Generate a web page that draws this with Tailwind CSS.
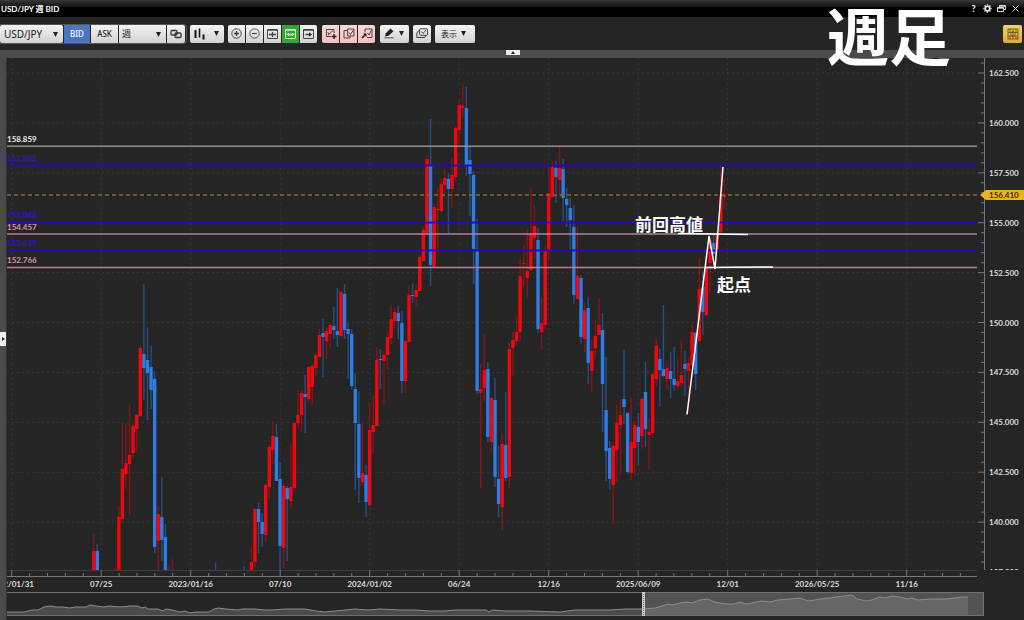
<!DOCTYPE html>
<html lang="ja">
<head>
    <meta charset="UTF-8">
    <meta name="viewport" content="width=device-width, initial-scale=1.0">
    <title>USD/JPY 週 BID</title>
    <script src="https://cdn.jsdelivr.net/npm/@tailwindcss/browser@4"></script>
</head>
<body class="h-screen flex flex-col overflow-hidden bg-[#252525] text-white font-[family-name:'Noto_Sans','Noto_Sans_CJK_JP',sans-serif]">
    <!-- Title bar -->
    <header class="h-[17px] shrink-0 flex items-center justify-between pl-px pr-1 bg-linear-to-b from-[#383838] via-[#151515] via-40% to-black to-50% font-[family-name:'Lato','Noto_Sans_CJK_JP',sans-serif]">
        <h1 class="text-[8px] leading-3 font-bold">USD/JPY 週 BID</h1>
        <div class="flex items-center gap-[5px]">
            <button aria-label="Help" class="w-[9px] text-[9px] leading-3 font-bold">?</button>
            <button aria-label="Settings">
                <svg class="size-[9px]" viewBox="0 0 9 9" fill="none" stroke="#eee">
                    <circle cx="4.5" cy="4.5" r="2.3" stroke-width="1.6"/>
                    <path d="M4.5 0.3v1.4M4.5 7.3v1.4M0.3 4.5h1.4M7.3 4.5h1.4M1.5 1.5l1 1M6.5 6.5l1 1M7.5 1.5l-1 1M2.5 6.5l-1 1" stroke-width="1.3"/>
                </svg>
            </button>
            <button aria-label="Restore">
                <svg class="size-[9px]" viewBox="0 0 9 9" fill="none" stroke="#ddd" stroke-width="1">
                    <path d="M2.5 3V1.500h6v4H7"/>
                    <path d="M2.500 2h6" stroke-width="1.500"/>
                    <path d="M0.500 3.500h6v4h-6zM0.500 4.200h6"/>
                </svg>
            </button>
            <button aria-label="Close">
                <svg class="size-[9px]" viewBox="0 0 9 9" fill="none" stroke="#ddd" stroke-width="1"><path d="M1.500 1.500l6 6M7.500 1.500l-6 6"/></svg>
            </button>
        </div>
    </header>

    <!-- Toolbar -->
    <div class="h-[33px] shrink-0 flex items-center text-[#222] pr-[2px]">
        <div class="flex gap-px h-5 items-center border border-l-0 border-[#555] rounded-r-sm pr-px">
            <div class="relative">
                <select aria-label="Pair" class="appearance-none block w-[63px] h-[18px] pl-1 rounded-xs text-[10px] leading-[18px] bg-linear-to-b from-[#f4f4f4] to-[#d2d2d2]"><option>USD/JPY</option></select>
                <svg class="absolute right-[5px] top-[7px] w-[5px] h-[5px] pointer-events-none" viewBox="0 0 5 5"><path d="M0 0h5L2.500 5z" fill="#222"/></svg>
            </div>
            <button class="w-[26px] h-[18px] text-[8px] font-medium bg-[#4a75c4] text-white">BID</button>
            <button class="w-[27px] h-[18px] text-[8px] font-medium bg-linear-to-b from-[#f4f4f4] to-[#d2d2d2]">ASK</button>
            <div class="relative">
                <select aria-label="Period" class="appearance-none block w-[47px] h-[18px] pl-[3px] text-[9px] leading-[18px] bg-linear-to-b from-[#f4f4f4] to-[#d2d2d2]"><option>週</option></select>
                <svg class="absolute right-[5px] top-[7px] w-[5px] h-[5px] pointer-events-none" viewBox="0 0 5 5"><path d="M0 0h5L2.500 5z" fill="#222"/></svg>
            </div>
            <button aria-label="Link" class="w-[18px] h-[18px] rounded-r-xs flex items-center justify-center bg-linear-to-b from-[#f4f4f4] to-[#d2d2d2]">
                <svg class="w-3 h-[10px]" viewBox="0 0 12 10" fill="none" stroke="#333" stroke-width="1.300"><rect x="1" y="1.500" width="6" height="4.500" rx="1"/><rect x="5" y="4" width="6" height="4.500" rx="1"/></svg>
            </button>
        </div>
        <button aria-label="Chart type" class="ml-[3px] w-[34px] h-[18px] rounded-xs flex items-center justify-between pl-1 pr-[5px] bg-linear-to-b from-[#f4f4f4] to-[#d2d2d2]">
            <svg class="w-[11px] h-3" viewBox="0 0 11 12" stroke="#111"><path d="M1.500 2v8M9.500 6.500v5" stroke-width="2"/><path d="M5.500 0.500v9" stroke-width="1.600"/></svg>
            <svg class="w-[5px] h-[5px]" viewBox="0 0 5 5"><path d="M0 0h5L2.500 5z" fill="#222"/></svg>
        </button>
        <div class="ml-1 flex gap-px">
            <button aria-label="Zoom in" class="w-[17px] h-[18px] rounded-l-xs flex items-center justify-center bg-linear-to-b from-[#f4f4f4] to-[#d2d2d2]">
                <svg class="size-[11px]" viewBox="0 0 11 11" fill="none" stroke="#333"><circle cx="5.500" cy="5.500" r="4.700" stroke-width="0.900"/><path d="M3 5.500h5M5.500 3v5" stroke-width="1.300"/></svg>
            </button>
            <button aria-label="Zoom out" class="w-[17px] h-[18px] flex items-center justify-center bg-linear-to-b from-[#f4f4f4] to-[#d2d2d2]">
                <svg class="size-[11px]" viewBox="0 0 11 11" fill="none" stroke="#444"><circle cx="5.500" cy="5.500" r="4.700" stroke-width="0.900"/><path d="M3 5.500h5" stroke-width="1.100"/></svg>
            </button>
            <button aria-label="Fit all" class="w-[17px] h-[18px] flex items-center justify-center bg-linear-to-b from-[#f4f4f4] to-[#d2d2d2]">
                <svg class="w-[11px] h-[10px]" viewBox="0 0 11 10" fill="none" stroke="#444"><rect x="0.500" y="0.500" width="10" height="9" rx="0.500"/><path d="M0.500 1h10M2 5.500h7M5.500 3v5" stroke-width="1.300"/></svg>
            </button>
            <button aria-label="Fit width" class="w-[17px] h-[18px] flex items-center justify-center bg-[#35a535]">
                <svg class="w-[11px] h-[10px]" viewBox="0 0 11 10" fill="none" stroke="#cdebc9"><rect x="0.500" y="0.500" width="10" height="9" rx="0.500"/><path d="M0.500 1h10M1.500 5.500h8" stroke-width="1.300"/><path d="M3.500 4v3M7.500 4v3"/></svg>
            </button>
            <button aria-label="Go to latest" class="w-[17px] h-[18px] rounded-r-xs flex items-center justify-center bg-linear-to-b from-[#f4f4f4] to-[#d2d2d2]">
                <svg class="w-[11px] h-[10px]" viewBox="0 0 11 10" fill="none" stroke="#444"><rect x="0.500" y="0.500" width="10" height="9" rx="0.500"/><path d="M0.500 1h10M2.500 5.500h4" stroke-width="1.500"/><path d="M6 3.200l3 2.300-3 2.300z" fill="#222" stroke="none"/></svg>
            </button>
        </div>
        <div class="ml-[5px] flex gap-px">
            <button aria-label="Add drawing" class="w-[17px] h-[18px] rounded-l-xs flex items-center justify-center bg-linear-to-b from-[#f8dada] to-[#f3c0c0]">
                <svg class="w-3 h-[11px]" viewBox="0 0 12 11" fill="none" stroke="#5a4040"><path d="M9 5V1.500H1.500V8.500H6M3 7L8 2.500M3 4.500l1 2"/><path d="M9 6v5M6.500 8.500h5" stroke="#222" stroke-width="1.400"/></svg>
            </button>
            <button aria-label="Copy drawing" class="w-[17px] h-[18px] flex items-center justify-center bg-linear-to-b from-[#f8dada] to-[#f3c0c0]">
                <svg class="w-3 h-[11px]" viewBox="0 0 12 11" fill="none" stroke="#5a4040"><path d="M4.500 1H11v7H4.500z"/><path d="M4.500 2.500H1v7.500h6V8M6 4.500l1.500 2L10.500 2"/></svg>
            </button>
            <button aria-label="Edit drawing" class="w-[17px] h-[18px] rounded-r-xs flex items-center justify-center bg-linear-to-b from-[#f8dada] to-[#f3c0c0]">
                <svg class="w-3 h-[11px]" viewBox="0 0 12 11" fill="none" stroke="#5a4040"><path d="M4 4.500V1H11v8.500H6M6.500 5l1.500 2L10.500 2"/><path d="M1 10l3-3" stroke="#222" stroke-width="1.600"/><path d="M2 5.500h3.500v3.500z" fill="#222" stroke="none"/></svg>
            </button>
        </div>
        <button aria-label="Pen" class="ml-[5px] w-[29px] h-[18px] rounded-xs flex items-center justify-between pl-1 pr-[5px] bg-linear-to-b from-[#f4f4f4] to-[#d2d2d2]">
            <svg class="w-[11px] h-[11px]" viewBox="0 0 11 11"><path d="M1 8.500L1.800 5.300 6.500 0.500l3 2.800L4.500 7.800z" fill="#222"/><path d="M0.500 9.800h9" stroke="#555"/></svg>
            <svg class="w-[5px] h-[5px]" viewBox="0 0 5 5"><path d="M0 0h5L2.500 5z" fill="#222"/></svg>
        </button>
        <button aria-label="Windows" class="ml-1 w-[18px] h-[18px] rounded-xs flex items-center justify-center bg-linear-to-b from-[#f4f4f4] to-[#d2d2d2]">
            <svg class="w-3 h-[11px]" viewBox="0 0 12 11" fill="none" stroke="#444"><rect x="3.500" y="0.800" width="8" height="6.500" rx="1"/><path d="M3.500 3H2.300l-1.500 2v4.500h8l1-2M5.500 3.500l1.500 2 3-3.500"/></svg>
        </button>
        <button class="ml-1 w-10 h-[18px] rounded-xs flex items-center justify-between pl-[6px] pr-[9px] text-[8px] bg-linear-to-b from-[#f4f4f4] to-[#d2d2d2]">
            <span class="whitespace-nowrap">表示</span>
            <svg class="w-[5px] h-[5px]" viewBox="0 0 5 5"><path d="M0 0h5L2.500 5z" fill="#222"/></svg>
        </button>
        <button aria-label="Layout" class="ml-auto w-[19px] h-[18px] rounded-xs flex items-center justify-center bg-linear-to-b from-[#f2d668] to-[#dda83c]">
            <svg class="size-3" viewBox="0 0 12 12" fill="none" stroke="#6b571c" stroke-width="0.900"><rect x="1" y="1" width="10" height="10"/><path d="M1 4.500h10M1 8h10M6 1v10M3 1v3.500M9 1v3.500M3 8v3M9 8v3"/><circle cx="6" cy="6" r="2.300"/></svg>
        </button>
    </div>

    <div class="h-2 shrink-0 bg-[#4b4b4b] flex justify-center">
        <button aria-label="Collapse toolbar" class="ml-[2px] w-[14px] h-[5px] bg-[#eee] flex items-center justify-center">
            <svg class="w-1 h-[3px]" viewBox="0 0 4 3"><path d="M0 3h4L2 0z" fill="#222"/></svg>
        </button>
    </div>

    <div class="flex-1 min-h-0 flex">
        <div class="w-[7px] shrink-0 bg-[#4b4b4b] flex items-center border-r border-[#333]">
            <button aria-label="Open panel" class="w-[6px] h-[14px] bg-[#eee] flex items-center justify-center">
                <svg class="w-[3px] h-1" viewBox="0 0 3 4"><path d="M0 0v4L3 2z" fill="#222"/></svg>
            </button>
        </div>

        <main class="flex-1 min-w-0 flex flex-col pb-1 font-[family-name:'Lato','Noto_Sans_CJK_JP',sans-serif]">
            <div class="flex-1 min-h-0 flex">
                <!-- Plot -->
                <div id="plot" class="relative flex-1 min-w-0">
                    <svg class="absolute inset-0 size-full" viewBox="7 58 970 512" preserveAspectRatio="none">
                        <g id="grid" stroke="#363636" stroke-dasharray="2 3"></g>
                        <g id="candles"></g>
                        <path d="M7 195H977" stroke="#8a6c1c" stroke-width="1.300" stroke-dasharray="4 3"/>
                        <path d="M7 146.300H977" stroke="#918d8d" stroke-width="1.600"/>
                        <path d="M7 165.500H977M7 222.500H977M7 250.500H977" stroke="#2a08b8" stroke-width="1.800"/>
                        <path d="M7 234H977M7 267.500H977" stroke="#b77f93" stroke-width="1.600"/>
                        <g fill="none" stroke="#fff" stroke-width="1.500">
                            <path d="M687 414.500L709 236L715 269L723 167"/>
                            <path d="M678 233.500L748 234.500M705 267.500L773 267"/>
                        </g>
                    </svg>
                    <div id="lineLabels"></div>
                </div>
                <!-- Price axis -->
                <div id="priceAxis" class="relative w-[47px] shrink-0 overflow-hidden">
                    <svg class="absolute left-0 top-0 w-[8px] h-full" viewBox="0 58 8 512" preserveAspectRatio="none">
                        <path id="priceTicks" fill="none" stroke="#777"/>
                    </svg>
                </div>
            </div>

            <!-- Date axis -->
            <div id="dateAxis" class="relative h-[22px] shrink-0 mr-[47px] overflow-hidden">
                <svg class="absolute left-0 top-0 w-full h-[7px]" viewBox="7 570 970 7" preserveAspectRatio="none">
                    <path d="M7 570.500H977" stroke="#3c3c3c"/>
                    <path id="dateTicks" fill="none" stroke="#777"/>
                </svg>
            </div>

            <!-- Range navigator -->
            <div class="h-6 shrink-0 mr-10">
                <svg class="size-full" viewBox="7 592 977 24" preserveAspectRatio="none">
                    <rect x="644" y="592" width="340" height="24" fill="#535353"/>
                    <path id="navLeft" fill="#4b4b4b"/>
                    <path id="navRight" fill="#666"/>
                    <path id="navLine" fill="none" stroke="#8d8d8d"/>
                    <path d="M7 592.500H984M7 615.500H984M983.500 592V616" stroke="#707070"/>
                    <path d="M643.500 592V616" stroke="#c9c9c9" stroke-width="3"/>
                    <path d="M643.500 594V615" stroke="#777" stroke-dasharray="1 1"/>
                </svg>
            </div>
        </main>
    </div>

    <p class="absolute right-[73px] -top-2 text-[62px] leading-[84px] font-bold font-[family-name:'Noto_Sans_CJK_JP',sans-serif] pointer-events-none">週足</p>

    <script>
        const TOP = 58, LEFT = 7, W = 970, H = 512;
        const STEP = 3.583, X0 = 100.9;

        // bar number, direction (r = up, b = down), high, body top, body bottom, low
        const bars = `
-2 r 534 551 570 570|-1 b 544 551 570 570|4 r 568 570 570 570|5 r 506 517 570 570|6 r 423 469 519 520
7 r 423 463 474 489|8 r 404 455 464 515|9 r 424 426 453 458|10 r 414 415 429 452|11 r 345 348 416 417
12 b 284 354 368 400|13 b 328 360 373 420|14 b 346 367 390 409|15 b 371 379 547 553|16 r 506 514 541 569
17 b 477 517 540 561|18 b 524 537 570 570|19 r 565 570 570 570|20 r 559 570 570 570|32 b 563 570 570 570
40 b 566 570 570 570|42 r 547 562 570 570|43 r 508 509 562 568|44 b 503 509 522 553|45 b 513 522 534 547
46 r 484 485 535 542|47 r 445 447 487 498|48 r 421 436 450 464|49 b 424 437 481 481|50 b 462 479 546 570
51 r 483 486 548 568|52 b 486 488 499 561|53 r 445 487 501 508|54 r 423 423 488 492|55 r 391 415 423 429
56 r 390 393 415 432|57 b 375 394 397 433|58 r 366 367 399 402|59 r 364 366 387 405|60 r 354 355 368 376
61 r 329 335 357 357|62 b 319 333 337 377|63 r 327 331 341 359|64 r 323 325 334 347|65 b 307 326 330 339
66 b 288 331 335 347|67 r 291 292 336 337|68 b 284 294 330 339|69 b 323 329 334 379|70 b 329 334 386 389
71 b 373 389 423 490|72 b 391 424 478 503|73 r 423 473 482 485|74 b 465 475 502 517|75 r 403 430 505 506
76 r 395 425 432 454|77 r 347 360 426 426|78 b 349 359 360 389|79 r 351 355 361 405|80 r 331 337 355 370
81 r 305 319 338 344|82 r 308 312 321 329|83 b 306 313 321 339|84 b 311 323 381 393|85 r 340 341 381 393
86 r 285 295 342 342|87 b 283 295 296 303|88 r 284 290 297 306|89 r 255 257 291 291|90 r 227 230 261 261
91 r 155 159 233 234|92 b 119 166 265 286|93 r 204 207 267 267|94 r 188 209 210 252|95 r 179 184 211 213
96 r 169 178 185 194|97 b 174 179 189 233|98 r 158 175 189 208|99 r 127 128 177 180|100 r 98 105 130 148
101 r 84 106 108 117|102 b 87 108 165 176|103 b 147 160 174 216|104 b 171 175 249 284|105 b 219 250 391 394
106 r 364 389 393 488|107 r 334 370 388 401|108 b 362 369 437 442|109 r 397 398 442 453|110 b 378 400 477 487
111 b 446 479 504 517|112 r 433 444 507 530|113 b 392 445 478 481|114 r 342 349 477 489|115 r 332 340 348 376
116 r 316 332 341 346|117 r 259 276 332 341|118 r 245 263 264 287|119 r 229 271 278 297|120 r 188 234 270 271
121 r 205 226 238 258|122 b 228 240 329 333|123 r 298 323 332 350|124 r 247 251 325 329|125 r 166 193 250 259
126 r 161 167 197 198|127 b 161 168 177 203|128 r 146 168 180 198|129 b 159 169 198 223|130 b 188 199 205 227
131 b 198 208 220 249|132 b 205 227 295 304|133 r 227 276 299 299|134 b 275 278 337 344|135 r 303 310 339 352
136 b 297 308 363 384|137 r 339 351 371 392|138 r 320 336 348 359|139 r 298 325 335 335|140 b 313 330 384 432
141 b 357 410 451 481|142 b 441 448 479 490|143 r 442 446 485 524|144 r 404 423 450 482|145 r 399 415 425 475
146 b 350 399 407 424|147 b 412 413 472 474|148 r 397 442 473 480|149 r 421 425 448 475|150 b 413 427 442 466
151 r 398 399 436 449|152 b 362 392 429 447|153 r 418 432 435 469|154 r 373 374 433 438|155 r 339 346 379 386
156 b 349 359 370 406|157 b 305 369 376 377|158 r 361 368 379 390|159 b 352 371 379 398|160 b 347 379 385 391
161 r 359 381 386 389|162 r 340 375 383 387|163 b 351 364 369 396|164 r 357 363 371 412|165 r 324 332 365 365
166 b 332 333 374 390|167 r 258 289 341 342|168 b 273 287 312 335|169 r 263 267 315 316|170 r 237 240 263 292
171 b 235 243 254 254|172 r 230 235 250 250|173 r 166 195 232 233|174 r 179 195 197 210`.trim().split(/[|\n]/);

        document.getElementById('candles').innerHTML = bars.map(bar => {
            const [n, dir, high, top, bottom, low] = bar.split(' ');
            const x = X0 + STEP * n;
            const up = dir === 'r';
            return `<path d="M${x} ${high}V${low}" stroke="${up ? '#861519' : '#245083'}" stroke-width="1.4"/>` +
                `<path d="M${x} ${top}V${bottom}" stroke="${up ? '#f3070e' : '#2f7ce4'}" stroke-width="3.4"/>`;
        }).join('');

        // Grid and axes
        const dates = ['2022/01/31', '07/25', '2023/01/16', '07/10', '2024/01/02', '06/24', '12/16', '2025/06/09', '12/01', '2026/05/25', '11/16'];
        const dateAxis = document.getElementById('dateAxis');
        let grid = '';
        let dateTicks = 'M7 576.5H977';
        dates.forEach((date, i) => {
            const x = 11.7 + 89.5 * i;
            grid += `<path d="M${x} 58V570"/>`;
            for (let j = 0; j < 5; j++) {
                const tx = x + 17.9 * j;
                if (tx < 977) dateTicks += `M${tx} ${j ? 573 : 570}V577`;
            }
            dateAxis.insertAdjacentHTML('beforeend',
                `<span class="absolute top-2 -translate-x-1/2 whitespace-nowrap text-[8px] leading-3 font-bold text-[#ddd]" style="left:${(x - LEFT) / W * 100}%">${date}</span>`);
        });

        const priceAxis = document.getElementById('priceAxis');
        let priceTicks = 'M7.5 58V570';
        for (let i = 0; i <= 10; i++) {
            const y = 73 + 49.9 * i;
            grid += `<path d="M7 ${y}H977"/>`;
            for (let j = -1; j < 4; j++) {
                priceTicks += `M${j ? 4 : 1} ${y + j * 9.98}H8`;
            }
            priceAxis.insertAdjacentHTML('beforeend',
                `<span class="absolute left-3 -translate-y-1/2 text-[8px] leading-3 font-bold text-[#ddd]" style="top:${(y - TOP) / H * 100}%">${(162.5 - 2.5 * i).toFixed(3)}</span>`);
        }
        priceAxis.insertAdjacentHTML('beforeend',
            `<div class="absolute left-[3px] right-0 h-[10px] -translate-y-1/2 flex items-center" style="top:${(195 - TOP) / H * 100}%">
                <svg class="w-[6px] h-full" viewBox="0 0 6 10"><path d="M0 5L6 0V10z" fill="#eab41c"/></svg>
                <span class="flex-1 h-full pl-[3px] bg-[#eab41c] text-[#3a2c00] text-[8px] leading-[10px] font-bold">156.410</span>
            </div>`);
        document.getElementById('grid').innerHTML = grid;
        document.getElementById('dateTicks').setAttribute('d', dateTicks);
        document.getElementById('priceTicks').setAttribute('d', priceTicks);

        // Labels of the horizontal lines
        const lineLabels = document.getElementById('lineLabels');
        [['158.859', 139, '#eee'], ['157.892', 158, '#360fd4'], ['155.044', 215, '#360fd4'],
         ['154.457', 227, '#d596aa'], ['153.639', 243, '#360fd4'], ['152.766', 260, '#d596aa']].forEach(([text, y, color]) => {
            lineLabels.insertAdjacentHTML('beforeend',
                `<span class="absolute left-0 -translate-y-1/2 text-[8px] leading-3 font-bold" style="top:${(y - TOP) / H * 100}%;color:${color}">${text}</span>`);
        });
        [['前回高値', 635, 224], ['起点', 717, 284]].forEach(([text, x, y]) => {
            lineLabels.insertAdjacentHTML('beforeend',
                `<span class="absolute -translate-y-1/2 whitespace-nowrap text-[17px] leading-6 font-bold font-[family-name:'Noto_Sans_CJK_JP',sans-serif]" style="left:${(x - LEFT) / W * 100}%;top:${(y - TOP) / H * 100}%">${text}</span>`);
        });

        // Navigator
        const left = '7 612 24 612 32 610 38 610 44 607 50 606 56 607 62 607 70 608 75 607 86 607 90 605 96 606 104 607 110 606 120 607 130 606 138 606 142 608 145 607 148 609 158 609 163 611 166 609 172 610 180 612 185 611 190 613 196 612 209 612 214 609 218 608 226 609 238 610 242 609 255 609 265 610 272 610 285 609 305 609 316 611 325 612 345 610 355 609 368 610 380 609 400 610 415 610 430 611 445 611 455 610 486 610 489 612 492 610 505 611 530 611 560 612 575 610 590 610 610 610 625 609 643 609';
        const right = '643 609 655 608 662 606 668 604 673 605 680 603 687 602 692 603 700 600 708 599 714 602 720 603 728 604 734 604 740 602 746 604 752 603 762 601 770 602 778 600 790 599 800 598 808 601 815 600 826 598 830 598 835 597 845 596 852 595 857 599 866 601 872 600 880 597 885 598 892 596 900 597 907 599 912 598 918 600 930 599 945 599 955 598 962 597 968 597';
        document.getElementById('navLeft').setAttribute('d', `M7 616L${left}V616Z`);
        document.getElementById('navRight').setAttribute('d', `M643 616L${right}V616Z`);
        document.getElementById('navLine').setAttribute('d', `M${left}L${right}`);
    </script>
</body>
</html>
